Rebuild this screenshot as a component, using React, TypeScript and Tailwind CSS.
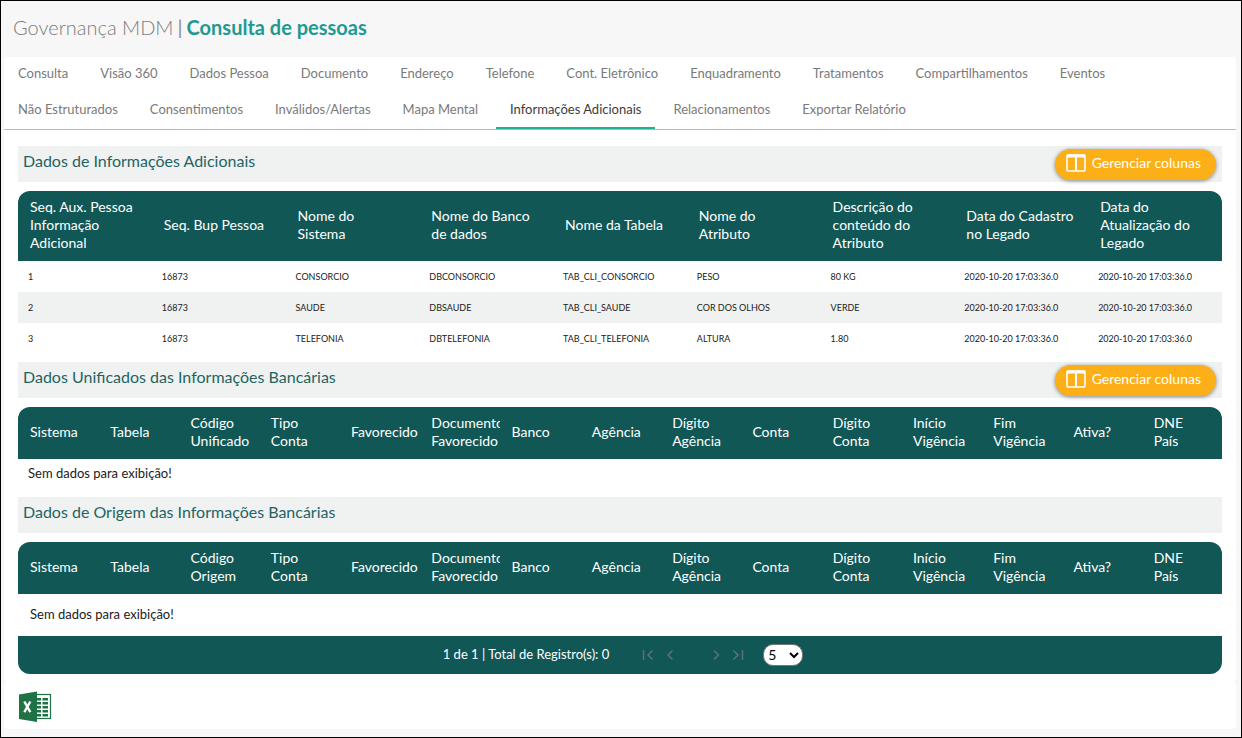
import React from "react";

const tabRows: string[][] = [
  [
    "Consulta",
    "Visão 360",
    "Dados Pessoa",
    "Documento",
    "Endereço",
    "Telefone",
    "Cont. Eletrônico",
    "Enquadramento",
    "Tratamentos",
    "Compartilhamentos",
    "Eventos",
  ],
  [
    "Não Estruturados",
    "Consentimentos",
    "Inválidos/Alertas",
    "Mapa Mental",
    "Informações Adicionais",
    "Relacionamentos",
    "Exportar Relatório",
  ],
];

const activeTab = "Informações Adicionais";

const infoColumns = [
  "Seq. Aux. Pessoa\nInformação\nAdicional",
  "Seq. Bup Pessoa",
  "Nome do\nSistema",
  "Nome do Banco\nde dados",
  "Nome da Tabela",
  "Nome do\nAtributo",
  "Descrição do\nconteúdo do\nAtributo",
  "Data do Cadastro\nno Legado",
  "Data do\nAtualização do\nLegado",
];

const stamp = "2020-10-20 17:03:36.0";

const infoRows = [
  ["1", "16873", "CONSORCIO", "DBCONSORCIO", "TAB_CLI_CONSORCIO", "PESO", "80 KG", stamp, stamp],
  ["2", "16873", "SAUDE", "DBSAUDE", "TAB_CLI_SAUDE", "COR DOS OLHOS", "VERDE", stamp, stamp],
  ["3", "16873", "TELEFONIA", "DBTELEFONIA", "TAB_CLI_TELEFONIA", "ALTURA", "1.80", stamp, stamp],
];

const bankColumns = (codeLabel: string) => [
  "Sistema",
  "Tabela",
  codeLabel,
  "Tipo\nConta",
  "Favorecido",
  "Documento\nFavorecido",
  "Banco",
  "Agência",
  "Dígito\nAgência",
  "Conta",
  "Dígito\nConta",
  "Início\nVigência",
  "Fim\nVigência",
  "Ativa?",
  "DNE\nPaís",
];

function SectionBar({ title, manage }: { title: string; manage?: boolean }) {
  return (
    <div className="flex h-9 items-start justify-between bg-[#f0f2f2] pr-1.5 pl-[5px]">
      <h2 className="pt-[3px] text-base leading-6 text-[#1f6463]">{title}</h2>
      {manage && (
        <button
          type="button"
          className="mt-[3px] flex h-[31px] items-center gap-1.5 rounded-full bg-[#fdaf17] pr-[15px] pb-[3px] pl-[11px] text-sm text-white shadow-[0_1px_4px_rgba(0,0,0,0.45)]"
        >
          <svg viewBox="0 0 20 18" className="h-[18px] w-5" fill="none" stroke="currentColor">
            <rect x="1" y="1" width="18" height="16" rx="1" strokeWidth="1.6" />
            <path d="M1 2h18" strokeWidth="3" />
            <path d="M10 2v15" strokeWidth="2" />
          </svg>
          Gerenciar colunas
        </button>
      )}
    </div>
  );
}

function HeaderRow({ columns }: { columns: string[] }) {
  return (
    <thead className="bg-[#115756] text-white">
      <tr>
        {columns.map((label) => (
          <th
            key={label}
            scope="col"
            className="overflow-hidden pt-[7px] pb-[9px] pl-3 text-left align-middle text-sm leading-[18px] font-normal whitespace-pre first:rounded-tl-xl last:rounded-tr-xl"
          >
            {label}
          </th>
        ))}
      </tr>
    </thead>
  );
}

function PagerButton({ label, path }: { label: string; path: string }) {
  return (
    <button type="button" aria-label={label} disabled className="flex h-5 w-[22px] items-center justify-center text-[#5b7279]">
      <svg viewBox="0 0 12 12" className="size-3" fill="none" stroke="currentColor" strokeWidth="1.5">
        <path d={path} />
      </svg>
    </button>
  );
}

function ExcelIcon() {
  return (
    <svg viewBox="0 0 34 32" className="h-8 w-[34px]">
      <rect x="17" y="3.5" width="15.5" height="24" fill="#fff" stroke="#1f7244" strokeWidth="1.2" />
      <g fill="#1f7244">
        <path d="M19 7h4v2.6h-4zM24.500 7h5.500v2.600h-5.500zM19 11h4v2.600h-4zM24.500 11h5.500v2.600h-5.500zM19 15h4v2.600h-4zM24.500 15h5.500v2.600h-5.500zM19 19h4v2.600h-4zM24.500 19h5.500v2.600h-5.500zM19 23h4v2.600h-4zM24.500 23h5.500v2.600h-5.500z" />
        <path d="M1 3.500 19 .5v30.500L1 28z" />
      </g>
      <path d="M6.300 10.500 12.300 21.200M12.300 10.500 6.300 21.200" stroke="#fff" strokeWidth="2.400" />
    </svg>
  );
}

export default function App() {
  return (
    <div className="min-h-screen border border-black bg-[#f7f7f7] font-['Lato',sans-serif] text-[#212121]">
      <header className="flex h-14 items-center gap-1 px-3 pb-1 text-xl leading-7">
        <span className="font-light text-[#7c7c7c]">Governança MDM</span>
        <span className="text-[#8c8c8c]">|</span>
        <h1 className="font-bold text-[#1d9a92]">Consulta de pessoas</h1>
      </header>

      <main className="mr-[5px] ml-[3px]">
        <section className="rounded bg-white">
          <nav className="border-b border-[#b8b8b8]">
            {tabRows.map((row, i) => (
              <div key={i} className="flex gap-1">
                {row.map((label) => (
                  <a
                    key={label}
                    href="#"
                    aria-current={label === activeTab ? "page" : undefined}
                    className={
                      label === activeTab
                        ? "h-9 border-b-2 border-[#1ab394] px-3.5 pt-1.5 text-[13px] leading-5 text-[#3c3c3c]"
                        : "h-9 px-3.5 pt-1.5 text-[13px] leading-5 text-[#7a7a7a]"
                    }
                  >
                    {label}
                  </a>
                ))}
              </div>
            ))}
          </nav>

          <div className="px-3.5 pt-4 pb-2">
            <SectionBar title="Dados de Informações Adicionais" manage />
            <table className="mt-[9px] w-full table-fixed">
              <HeaderRow columns={infoColumns} />
              <tbody>
                {infoRows.map((row) => (
                  <tr key={row[0]} className="h-[31px] even:bg-[#f0f2f2]">
                    {row.map((cell, i) => (
                      <td key={i} className="pl-2.5 text-[9px] leading-4">
                        {cell}
                      </td>
                    ))}
                  </tr>
                ))}
              </tbody>
            </table>

            <div className="mt-2">
              <SectionBar title="Dados Unificados das Informações Bancárias" manage />
            </div>
            <table className="mt-[9px] w-full table-fixed">
              <HeaderRow columns={bankColumns("Código\nUnificado")} />
              <tbody>
                <tr className="h-[30px]">
                  <td colSpan={15} className="pb-0.5 pl-2.5 text-[13px] leading-5">
                    Sem dados para exibição!
                  </td>
                </tr>
              </tbody>
            </table>

            <div className="mt-2">
              <SectionBar title="Dados de Origem das Informações Bancárias" />
            </div>
            <table className="mt-[9px] w-full table-fixed">
              <HeaderRow columns={bankColumns("Código\nOrigem")} />
              <tbody>
                <tr className="h-[42px]">
                  <td colSpan={15} className="pb-0.5 pl-3 text-[13px] leading-5">
                    Sem dados para exibição!
                  </td>
                </tr>
              </tbody>
            </table>
            <div className="flex h-[38px] items-center justify-center rounded-b-xl bg-[#115756] pl-1.5 text-[13px] text-white">
              <span className="pr-7">1 de 1 | Total de Registro(s): 0</span>
              <PagerButton label="Primeira página" path="M1.500 1v10M10.500 1.500 6 6l4.500 4.500" />
              <PagerButton label="Página anterior" path="M8.500 1.500 4 6l4.500 4.500" />
              <span className="w-6" />
              <PagerButton label="Próxima página" path="M4 1.500 8.500 6 4 10.500" />
              <PagerButton label="Última página" path="M1.500 1.500 6 6l-4.500 4.500M10.500 1v10" />
              <select
                aria-label="Registros por página"
                defaultValue="5"
                className="ml-3.5 h-[22px] w-10 rounded-[10px] border border-[#767676] bg-white pb-0.5 text-sm text-black"
              >
                <option>5</option>
                <option>10</option>
                <option>20</option>
              </select>
            </div>
          </div>
        </section>

        <section className="mb-2 h-[47px] rounded bg-white px-3.5 pt-[9px]">
          <button type="button" aria-label="Exportar para Excel" className="block">
            <ExcelIcon />
          </button>
        </section>
      </main>
    </div>
  );
}
